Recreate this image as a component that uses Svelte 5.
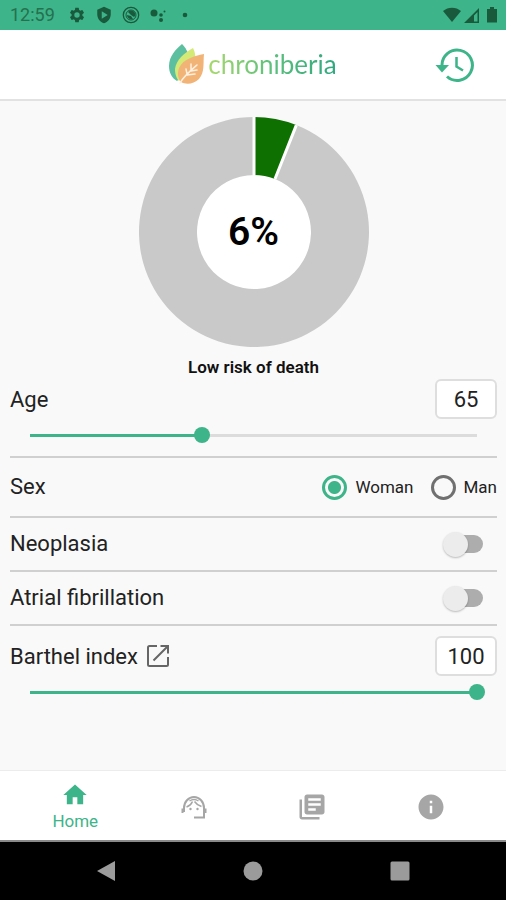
<script lang="ts">
	let age = $state(65)
	let barthel = $state(100)
	let sex = $state('woman')
	let neoplasia = $state(false)
	let fibrillation = $state(false)

	const minAge = 40
	const maxAge = 105
	const risk = 6

	const outer = 115
	const inner = 57

	let ageFill = $derived((age - minAge) / (maxAge - minAge))
	let barthelFill = $derived(barthel / 100)

	const point = (r: number, a: number) => `${115 + r * Math.sin(a)},${115 - r * Math.cos(a)}`

	// ring slice between two fractions of the circle
	const slice = (from: number, to: number) => {
		const a = from * 2 * Math.PI
		const b = to * 2 * Math.PI
		const large = to - from > 0.5 ? 1 : 0
		return `M${point(outer, a)} A${outer},${outer} 0 ${large} 1 ${point(outer, b)} L${point(inner, b)} A${inner},${inner} 0 ${large} 0 ${point(inner, a)} Z`
	}
</script>

<div class="app">
	<div class="status">
		<span class="time">12:59</span>
		<svg width="18" height="18" viewBox="0 0 24 24">
			<path d="M19.14 12.94c.04-.3.06-.61.06-.94 0-.32-.02-.64-.07-.94l2.03-1.58a.49.49 0 0 0 .12-.61l-1.92-3.32a.488.488 0 0 0-.59-.22l-2.39.96c-.5-.38-1.03-.7-1.62-.94l-.36-2.54a.484.484 0 0 0-.48-.41h-3.84c-.24 0-.43.17-.47.41l-.36 2.54c-.59.24-1.13.57-1.62.94l-2.39-.96c-.22-.08-.47 0-.59.22L2.74 8.87c-.12.21-.08.47.12.61l2.03 1.58c-.05.3-.09.63-.09.94s.02.64.07.94l-2.03 1.58a.49.49 0 0 0-.12.61l1.92 3.32c.12.22.37.29.59.22l2.39-.96c.5.38 1.03.7 1.62.94l.36 2.54c.05.24.24.41.48.41h3.84c.24 0 .44-.17.47-.41l.36-2.54c.59-.24 1.13-.56 1.62-.94l2.39.96c.22.08.47 0 .59-.22l1.92-3.32c.12-.22.07-.47-.12-.61l-2.01-1.58zM12 15.6A3.6 3.6 0 0 1 8.4 12a3.6 3.6 0 0 1 7.200 0 3.600 3.600 0 0 1-3.600 3.600z" />
		</svg>
		<svg width="18" height="18" viewBox="0 0 24 24">
			<path fill-rule="evenodd" d="M12 1 3 5v6c0 5.550 3.840 10.740 9 12 5.160-1.260 9-6.450 9-12V5zM9 7l8 5-8 5z" />
		</svg>
		<svg width="18" height="18" viewBox="0 0 18 18">
			<circle cx="9" cy="9" r="7.700" fill="none" stroke="#195a3d" stroke-width="1.300" />
			<circle cx="9" cy="9" r="5" fill="none" stroke="#195a3d" />
			<path d="M6 6c2-2 5-2 7 1 1 2 0 3-1 4L9 9z" />
			<path d="m5 9 4 1 2 3c-3 1-6-1-6-4z" />
		</svg>
		<svg width="18" height="18" viewBox="0 0 18 18">
			<circle cx="5" cy="7" r="3.500" /><circle cx="12" cy="9" r="1.800" />
			<circle cx="12" cy="14" r="2" /><circle cx="15.500" cy="5.500" r="1" />
		</svg>
		<svg width="18" height="18" viewBox="0 0 18 18"><circle cx="9" cy="9" r="2.300" /></svg>
		<div class="signals">
			<svg width="18" height="16" viewBox="0 0 18 16"><path d="M0 4C5-.5 13-.5 18 4L9 15z" /></svg>
			<svg width="16" height="16" viewBox="0 0 16 16">
				<path fill-rule="evenodd" d="M0 16 15 1v15zM10 8.500V14.500h3.500V5z" />
			</svg>
			<svg width="10" height="16" viewBox="0 0 10 16"><path d="M3 0h4v2h3v13.500H0V2h3z" /></svg>
		</div>
	</div>

	<header>
		<div class="logo">
			<svg width="36" height="42" viewBox="0 0 36 42">
				<path fill="#5cbf9f" d="M13 0C7 5 0 12 0 22c0 7 3 12 8 15l13-12C22 13 18 5 13 0z" />
				<path fill="#d3ea76" d="M24 4C15 9 7 16 6 25c0 6 2 10 4 12l15-14c2-7 2-13-1-19z" />
				<path fill="#f2b377" d="M35 10c-10 2-21 5-25 14-2 6-1 10 2 14 5 3 13 2 18-3 6-7 4-16 5-25z" />
				<path fill="none" stroke="#fff0df" stroke-width="1.500" stroke-linecap="round" d="M11 39c4-7 10-12 17-18M18 30l-1-5M22 26l0-6M18 31l8-1M22 27l6-1" />
			</svg>
			<span>chroniberia</span>
		</div>
		<button class="history" aria-label="History">
			<svg width="40" height="34" viewBox="0 0 40 34">
				<path fill="none" stroke="#3db489" stroke-width="3" d="M7 18a15.200 15.200 0 1 1 5 10.500" />
				<path fill="#3db489" d="M.5 17H14l-7 7.500z" />
				<path fill="none" stroke="#3db489" stroke-width="2.500" d="M21.500 9v9.500l6.500 4" />
			</svg>
		</button>
	</header>

	<main>
		<div class="chart">
			<svg width="230" height="230" viewBox="0 0 230 230">
				<circle cx="115" cy="115" r={inner} fill="#fff" />
				<path d={slice(risk / 100, 1)} fill="#c9c9c9" />
				<path d={slice(0, risk / 100)} fill="#0d7000" />
				<path d="M{point(inner, 0)} L{point(outer, 0)} M{point(inner, risk * Math.PI / 50)} L{point(outer, risk * Math.PI / 50)}" stroke="#fff" stroke-width="3" />
			</svg>
			<strong>{risk}%</strong>
		</div>
		<p class="risk">Low risk of death</p>

		<section class="measure">
			<div class="row">
				<label for="age">Age</label>
				<input id="age" class="value" type="text" inputmode="numeric" bind:value={age} />
			</div>
			<input class="slider" type="range" aria-label="Age" min={minAge} max={maxAge} bind:value={age} style:--fill={ageFill} />
		</section>

		<section class="row sex" role="radiogroup" aria-labelledby="sex">
			<span id="sex">Sex</span>
			<div class="options">
				<label><input type="radio" name="sex" value="woman" bind:group={sex} />Woman</label>
				<label><input type="radio" name="sex" value="man" bind:group={sex} />Man</label>
			</div>
		</section>

		<section class="row toggle">
			<label for="neoplasia">Neoplasia</label>
			<input id="neoplasia" type="checkbox" role="switch" bind:checked={neoplasia} />
		</section>

		<section class="row toggle">
			<label for="fibrillation">Atrial fibrillation</label>
			<input id="fibrillation" type="checkbox" role="switch" bind:checked={fibrillation} />
		</section>

		<section class="measure last">
			<div class="row">
				<div class="with-link">
					<label for="barthel">Barthel index</label>
					<a href="#barthel" aria-label="About the Barthel index">
						<svg width="24" height="24" viewBox="0 0 24 24" fill="none" stroke="#666" stroke-width="2">
							<path d="M11 2H3.500Q2 2 2 3.500v17Q2 22 3.500 22h17q1.500 0 1.500-1.500V13M14.500 2H22v7.500M22 2 7.500 16.500" />
						</svg>
					</a>
				</div>
				<input id="barthel" class="value" type="text" inputmode="numeric" bind:value={barthel} />
			</div>
			<input class="slider" type="range" aria-label="Barthel index" min="0" max="100" bind:value={barthel} style:--fill={barthelFill} />
		</section>
	</main>

	<nav class="tabs">
		<a href="#home" class="active">
			<svg width="28" height="28" viewBox="0 0 24 24"><path d="M10 20v-6h4v6h5v-8h3L12 3 2 12h3v8z" /></svg>
			Home
		</a>
		<a href="#support" aria-label="Support">
			<svg width="28" height="28" viewBox="0 0 28 28">
				<g fill="none" stroke="#a6a6a6" stroke-width="2">
					<path d="M4 19v-4a10 11 0 0 1 20 0v9.500H14" />
					<path d="M2.500 15.500v4.500M25.500 15.500v4.500" />
					<path d="M6.500 14c3-1 5-3 6-5.500M14.500 8.500c2 3 4 4 7 5M9.500 8c3-2 6-2 9 0" stroke-width="1.500" />
				</g>
				<circle cx="10.500" cy="16" r="1.200" /><circle cx="17.500" cy="16" r="1.200" />
			</svg>
		</a>
		<a href="#library" aria-label="Library">
			<svg width="30" height="30" viewBox="0 0 24 24">
				<path d="M4 6H2v14c0 1.100.9 2 2 2h14v-2H4V6zm16-4H8c-1.100 0-2 .9-2 2v12c0 1.100.9 2 2 2h12c1.100 0 2-.9 2-2V4c0-1.100-.9-2-2-2zm-1 9H9V9h10v2zm-4 4H9v-2h6v2zm4-8H9V5h10v2z" />
			</svg>
		</a>
		<a href="#info" aria-label="Information">
			<svg width="30" height="30" viewBox="0 0 24 24">
				<path d="M12 2C6.480 2 2 6.480 2 12s4.480 10 10 10 10-4.480 10-10S17.520 2 12 2zm1 15h-2v-6h2v6zm0-8h-2V7h2v2z" />
			</svg>
		</a>
	</nav>

	<div class="system">
		<button aria-label="Back"><svg width="20" height="22" viewBox="0 0 20 22"><path d="M1 11 19 1v20z" /></svg></button>
		<button aria-label="Home screen"><svg width="20" height="20" viewBox="0 0 20 20"><circle cx="10" cy="10" r="9.500" /></svg></button>
		<button aria-label="Recent apps"><svg width="20" height="20" viewBox="0 0 20 20"><rect width="19" height="19" x=".5" y=".5" rx="1.500" /></svg></button>
	</div>
</div>

<style>
	:global(body) {
		background: #f9f9f9;
	}

	.app {
		--green: #3db489;

		display: flex;
		flex-direction: column;
		min-height: 100vh;

		font-family: Roboto, sans-serif;
		font-size: 22px;
		line-height: 26px;
		color: #222;
	}

	svg {
		display: block;
		flex: none;
	}

	button {
		display: grid;
		place-content: center;
		padding: 0;
		border: 0;
		background: none;
	}

	input {
		margin: 0;
		box-sizing: border-box;
	}

	.status {
		display: flex;
		align-items: center;
		gap: 9px;
		height: 30px;
		padding: 0 9px 0 10px;

		background: var(--green);
		fill: #195a3d;
	}

	.time {
		margin-right: 4px;
		font-size: 18px;
		color: #25704f;
	}

	.signals {
		display: flex;
		align-items: center;
		gap: 3px;
		margin-left: auto;
	}

	.signals svg:last-child {
		margin-left: 4px;
	}

	header {
		display: grid;
		grid-template-columns: 1fr auto 1fr;
		align-items: center;
		height: 69px;

		background: #fff;
		border-bottom: 2px solid #e2e2e2;
	}

	.logo {
		grid-column: 2;
		display: flex;
		align-items: center;
		gap: 3px;
	}

	.logo span {
		padding-bottom: 2px;
		font-family: Lato, sans-serif;
		font-size: 26px;
		line-height: 32px;
		color: transparent;
		background: linear-gradient(90deg, #a9d86c, #5cc07c 50%, #2ea780);
		background-clip: text;
	}

	.history {
		justify-self: end;
		margin-right: 31px;
	}

	main {
		flex: 1;
		padding: 16px 9px 0 10px;
	}

	.chart {
		display: grid;
		place-items: center;
	}

	.chart > * {
		grid-area: 1 / 1;
	}

	.chart strong {
		font-size: 39px;
		line-height: 48px;
		font-weight: 600;
		color: #000;
	}

	.risk {
		margin: 10px 0 2px;
		font-size: 17px;
		line-height: 20px;
		font-weight: 600;
		text-align: center;
		color: #111;
	}

	section {
		border-bottom: 2px solid #d0d0d0;
	}

	.row {
		display: flex;
		align-items: center;
		justify-content: space-between;
	}

	.measure label {
		padding-top: 2px;
	}

	.value {
		width: 62px;
		height: 40px;
		padding: 0;

		font: inherit;
		color: #222;
		text-align: center;

		background: #fff;
		border: 2px solid #dedede;
		border-radius: 6px;
	}

	.slider {
		display: block;
		width: calc(100% - 24px);
		height: 16px;
		margin: 8px 12px 13px;
		appearance: none;

		background:
			linear-gradient(var(--green), var(--green)) 8px center / calc((100% - 16px) * var(--fill)) 3px no-repeat,
			linear-gradient(#dcdcdc, #dcdcdc) 8px center / calc(100% - 16px) 3px no-repeat;
	}

	.slider::-webkit-slider-thumb {
		appearance: none;
		width: 16px;
		height: 16px;
		border-radius: 50%;
		background: var(--green);
	}

	.sex {
		height: 58px;
	}

	.options {
		display: flex;
		gap: 17px;
	}

	.options label {
		display: flex;
		align-items: center;
		gap: 8px;
		font-size: 17px;
	}

	input[type='radio'] {
		appearance: none;
		width: 25px;
		height: 25px;
		border: 3px solid #707070;
		border-radius: 50%;
	}

	input[type='radio']:checked {
		border-color: var(--green);
		background: radial-gradient(circle, var(--green) 6px, transparent 7px);
	}

	.toggle {
		height: 52px;
	}

	input[type='checkbox'] {
		appearance: none;
		display: flex;
		align-items: center;
		width: 36px;
		height: 18px;
		margin-right: 14px;
		border-radius: 9px;
		background: #adadad;
	}

	input[type='checkbox']::before {
		content: '';
		width: 25px;
		height: 25px;
		margin-left: -4px;
		flex: none;
		border-radius: 50%;
		background: #ececec;
		box-shadow: 0 1px 2px rgb(0 0 0 / 25%);
	}

	input[type='checkbox']:checked {
		background: #9ed9c4;
	}

	input[type='checkbox']:checked::before {
		margin-left: 15px;
		background: var(--green);
	}

	.last {
		padding-top: 10px;
		border: 0;
	}

	.with-link {
		display: flex;
		align-items: center;
		gap: 8px;
	}

	.tabs {
		display: flex;
		height: 69px;
		padding: 0 16px;

		background: #fff;
		border-top: 1px solid #ececec;
		border-bottom: 2px solid #8a8a8a;
	}

	.tabs a {
		flex: 1;
		display: flex;
		flex-direction: column;
		align-items: center;
		justify-content: center;
		padding-top: 3px;

		font-size: 17px;
		line-height: 24px;
		text-decoration: none;
		color: #a6a6a6;
		fill: currentColor;
	}

	.tabs .active {
		color: var(--green);
	}

	.system {
		display: flex;
		justify-content: center;
		gap: 99px;
		height: 58px;

		background: #000;
		fill: #9b9b9b;
	}

	.system button {
		width: 48px;
	}
</style>
